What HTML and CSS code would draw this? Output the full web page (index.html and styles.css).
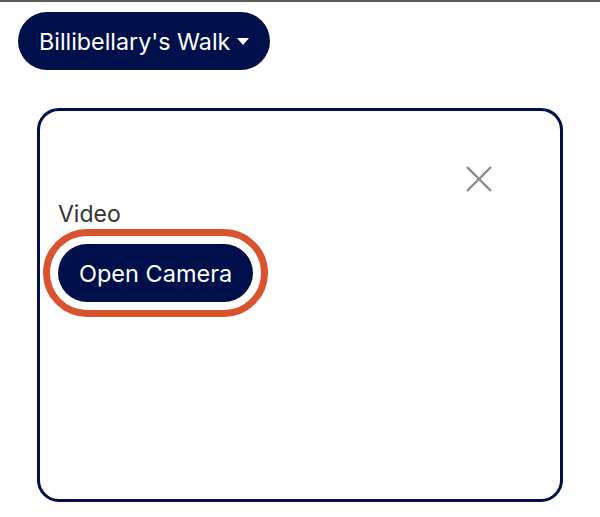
FILE: index.html
```html
<!DOCTYPE html>
<html lang="en">

<head>
    <meta charset="UTF-8">
    <meta name="viewport" content="width=device-width, initial-scale=1.0">
    <link rel="stylesheet" href="styles.css">
</head>

<body>
    <div class="top">
        <button class="walk-select">Billibellary's Walk<span class="caret"></span></button>
    </div>

    <div class="panel">
        <div class="panel-head">
            <button class="close" aria-label="Close">
                <svg width="26" height="26" viewBox="0 0 26 26">
                    <path d="M1 1 L25 25 M25 1 L1 25" stroke="#8a8a8a" stroke-width="2.4" fill="none" />
                </svg>
            </button>
        </div>
        <div class="field">
            <div class="field-label">Video</div>
            <button class="btn-camera">Open Camera</button>
        </div>
    </div>
</body>

</html>
```

FILE: styles.css
```css
body {
    margin: 0;
    border-top: 2px solid #5c5c5c;
    font-family: Inter, "Noto Sans", sans-serif;
    background: #fff;
}

button {
    font-family: inherit;
    cursor: pointer;
}

.top {
    padding: 10px 18px 0;
}

/* walk picker */
.walk-select {
    height: 58px;
    padding: 0 21px 0 21px;
    border: none;
    border-radius: 29px;
    background: #00104a;
    color: #fff;
    font-size: 23.3px;
    display: inline-flex;
    align-items: center;
}

.caret {
    width: 0;
    height: 0;
    margin-left: 7px;
    border-left: 6px solid transparent;
    border-right: 6px solid transparent;
    border-top: 7px solid #fff;
}

.panel {
    margin: 38px 0 0 37px;
    width: 520px;
    height: 388px;
    border: 3px solid #00104a;
    border-radius: 22px;
}

.panel-head {
    display: flex;
    justify-content: flex-end;
    padding: 55px 68px 0 0;
}

.close {
    border: none;
    background: none;
    padding: 0;
    width: 26px;
    height: 26px;
    display: block;
}

.close svg {
    display: block;
}

.field {
    padding: 8px 0 0 18px;
}

.field-label {
    font-size: 23px;
    color: #333;
    margin-bottom: 16px;
}

.btn-camera {
    height: 58px;
    padding: 0 21px;
    border: none;
    border-radius: 29px;
    background: #00104a;
    color: #fff;
    font-size: 23.5px;
    outline: 7px solid #d9532f;
    outline-offset: 8px;
}
```
